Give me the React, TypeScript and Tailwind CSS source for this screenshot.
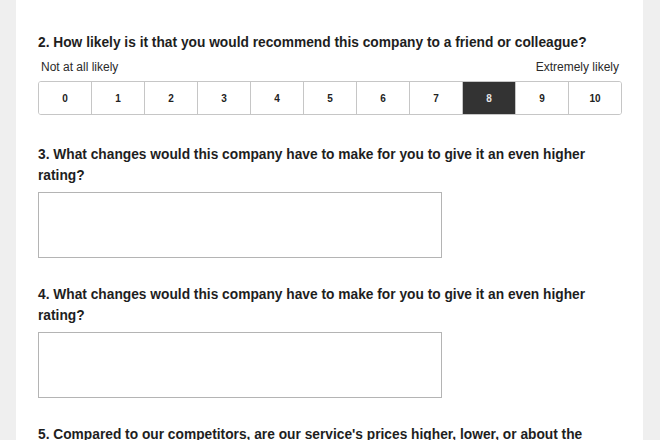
const scale = [0, 1, 2, 3, 4, 5, 6, 7, 8, 9, 10];
const selected = 8;

function OpenQuestion({ n, text }: { n: number; text: string }) {
  return (
    <div>
      <h2 className="text-[13.75px] font-bold leading-[21px] text-[#1e1e1e]">
        {n}. {text}
      </h2>
      <div className="mt-[6px] h-[66px] w-[404px] border border-[#b4b4b4] bg-white" />
    </div>
  );
}

export default function App() {
  return (
    <div className="h-[440px] overflow-hidden bg-[#efefef] font-['Liberation_Sans',Arial,sans-serif]">
      <div className="ml-[16px] mr-[17px] h-full bg-white pl-[22px] pt-[32px]">
        <div className="w-[584px]">
          <h2 className="text-[13.75px] font-bold leading-[21px] text-[#1e1e1e]">
            2. How likely is it that you would recommend this company to a friend or colleague?
          </h2>
          <div className="mt-[7px] flex justify-between px-[3px] text-[12px] leading-[14px] text-[#2a2a2a]">
            <span>Not at all likely</span>
            <span>Extremely likely</span>
          </div>
          <div className="mt-[7px] flex h-[34px] overflow-hidden rounded-[3px] border border-[#c6c6c6]">
            {scale.map((v, i) => (
              <div
                key={v}
                className={
                  "flex flex-1 items-center justify-center text-[10px] font-bold " +
                  (i > 0 ? "border-l border-[#c6c6c6] " : "") +
                  (v === selected ? "bg-[#333333] text-[#e6e6e6]" : "bg-white text-[#222]")
                }
              >
                {v}
              </div>
            ))}
          </div>

          <div className="mt-[29px] flex flex-col gap-[26px]">
            <OpenQuestion n={3} text="What changes would this company have to make for you to give it an even higher rating?" />
            <OpenQuestion n={4} text="What changes would this company have to make for you to give it an even higher rating?" />
            <h2 className="text-[13.75px] font-bold leading-[21px] text-[#1e1e1e]">
              5. Compared to our competitors, are our service's prices higher, lower, or about the same?
            </h2>
          </div>
        </div>
      </div>
    </div>
  );
}
